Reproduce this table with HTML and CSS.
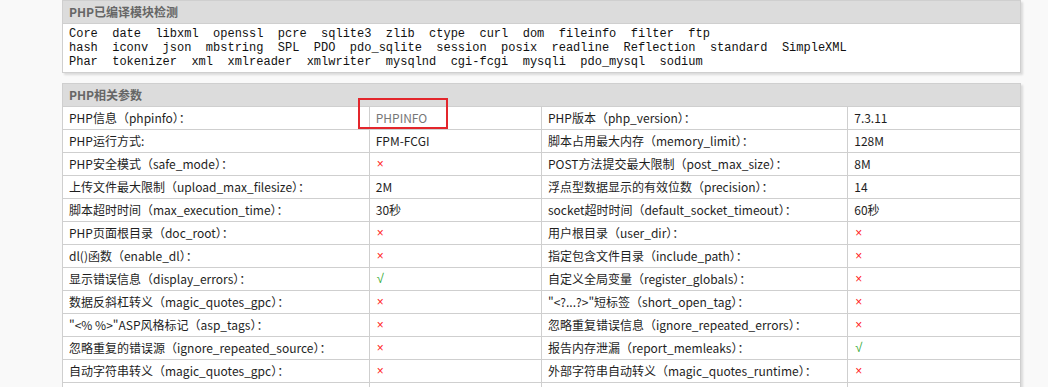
FILE: index.html
```html
<!DOCTYPE html>
<html lang="zh-CN">
<head>
<meta charset="utf-8">
<title>PHP探针</title>
<link rel="stylesheet" href="styles.css">
</head>
<body>
<div class="page">
  <section class="box">
    <div class="box-head">PHP已编译模块检测</div>
    <div class="modules">
      <div class="mline">Core&nbsp; date&nbsp; libxml&nbsp; openssl&nbsp; pcre&nbsp; sqlite3&nbsp; zlib&nbsp; ctype&nbsp; curl&nbsp; dom&nbsp; fileinfo&nbsp; filter&nbsp; ftp</div>
      <div class="mline">hash&nbsp; iconv&nbsp; json&nbsp; mbstring&nbsp; SPL&nbsp; PDO&nbsp; pdo_sqlite&nbsp; session&nbsp; posix&nbsp; readline&nbsp; Reflection&nbsp; standard&nbsp; SimpleXML</div>
      <div class="mline">Phar&nbsp; tokenizer&nbsp; xml&nbsp; xmlreader&nbsp; xmlwriter&nbsp; mysqlnd&nbsp; cgi-fcgi&nbsp; mysqli&nbsp; pdo_mysql&nbsp; sodium</div>
    </div>
  </section>

  <section class="box box-params">
    <div class="box-head">PHP相关参数</div>
    <table class="params">
      <colgroup>
        <col class="c-label"><col class="c-val"><col class="c-label"><col class="c-val">
      </colgroup>
      <tbody>
        <tr><td>PHP信息（phpinfo）：</td><td><a class="link">PHPINFO</a></td><td>PHP版本（php_version）：</td><td>7.3.11</td></tr>
        <tr><td>PHP运行方式:</td><td>FPM-FCGI</td><td>脚本占用最大内存（memory_limit）：</td><td>128M</td></tr>
        <tr><td>PHP安全模式（safe_mode）：</td><td><span class="no">×</span></td><td>POST方法提交最大限制（post_max_size）：</td><td>8M</td></tr>
        <tr><td>上传文件最大限制（upload_max_filesize）：</td><td>2M</td><td>浮点型数据显示的有效位数（precision）：</td><td>14</td></tr>
        <tr><td>脚本超时时间（max_execution_time）：</td><td>30秒</td><td>socket超时时间（default_socket_timeout）：</td><td>60秒</td></tr>
        <tr><td>PHP页面根目录（doc_root）：</td><td><span class="no">×</span></td><td>用户根目录（user_dir）：</td><td><span class="no">×</span></td></tr>
        <tr><td>dl()函数（enable_dl）：</td><td><span class="no">×</span></td><td>指定包含文件目录（include_path）：</td><td><span class="no">×</span></td></tr>
        <tr><td>显示错误信息（display_errors）：</td><td><span class="yes">√</span></td><td>自定义全局变量（register_globals）：</td><td><span class="no">×</span></td></tr>
        <tr><td>数据反斜杠转义（magic_quotes_gpc）：</td><td><span class="no">×</span></td><td>"&lt;?...?&gt;"短标签（short_open_tag）：</td><td><span class="no">×</span></td></tr>
        <tr><td>"&lt;% %&gt;"ASP风格标记（asp_tags）：</td><td><span class="no">×</span></td><td>忽略重复错误信息（ignore_repeated_errors）：</td><td><span class="no">×</span></td></tr>
        <tr><td>忽略重复的错误源（ignore_repeated_source）：</td><td><span class="no">×</span></td><td>报告内存泄漏（report_memleaks）：</td><td><span class="yes">√</span></td></tr>
        <tr><td>自动字符串转义（magic_quotes_gpc）：</td><td><span class="no">×</span></td><td>外部字符串自动转义（magic_quotes_runtime）：</td><td><span class="no">×</span></td></tr>
        <tr><td></td><td></td><td></td><td></td></tr>
      </tbody>
    </table>
    <div class="mark"></div>
  </section>
</div>
</body>
</html>
```

FILE: styles.css
```css
html, body {
  margin: 0;
  padding: 0;
  background: #f9f9f9;
}

body {
  font-family: "Noto Sans CJK SC", "Noto Sans", sans-serif;
  font-size: 12px;
  color: #1e1e1e;
}

.page {
  width: 959px;
  margin-left: 62px;
  display: flex;
  flex-direction: column;
  gap: 10px;
}

.box {
  background: #fff;
  border: 1px solid #cfcfcf;
  box-shadow: 2px 2px 2px rgba(0, 0, 0, 0.12);
}

.box-params {
  position: relative;
}

.box-head {
  height: 22px;
  line-height: 22px;
  padding-left: 6px;
  background: #dcdcdc;
  border-bottom: 1px solid #cfcfcf;
  font-weight: bold;
  color: #666;
  font-size: 12px;
}

.modules {
  padding: 3px 6px 3px;
  font-family: "Liberation Mono", "Courier New", monospace;
  font-size: 12px;
  line-height: 14px;
  color: #111;
}

.mline {
  white-space: nowrap;
}

.params {
  width: 100%;
  border-collapse: collapse;
  table-layout: fixed;
}

.c-label { width: 32%; }
.c-val { width: 18%; }

.params td {
  height: 22px;
  padding: 0 6px;
  border: 1px solid #cfcfcf;
  line-height: 22px;
  white-space: nowrap;
  overflow: hidden;
}

.params tr:first-child td { border-top: 0; }
.params td:first-child { border-left: 0; }
.params td:last-child { border-right: 0; }

.link {
  color: #777;
}

.no,
.yes {
  display: inline-block;
  vertical-align: top;
  height: 22px;
  line-height: 22px;
  padding-left: 1px;
  font-family: "Liberation Sans", sans-serif;
}

.no {
  color: #f22;
  font-size: 12px;
}

.yes {
  color: #3a3;
  font-size: 13px;
}

.mark {
  position: absolute;
  left: 295px;
  top: 14px;
  width: 86px;
  height: 27px;
  border: 2px solid #e3262c;
}
```
